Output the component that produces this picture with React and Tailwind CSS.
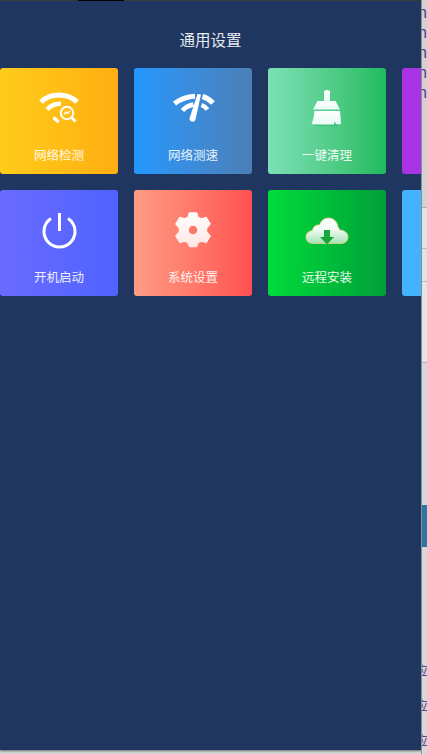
const font = { fontFamily: '"Noto Sans CJK SC", "Liberation Sans", sans-serif' };

function WifiCheck() {
  return (
    <svg width="48" height="40" viewBox="0 0 48 40" fill="none" stroke="#fff">
      <path d="M6 14 C15 4.5 33 4.5 42 14" strokeWidth="5" />
      <path d="M12 21.5 C16.5 17 21 15.5 26 15.8" strokeWidth="4.4" />
      <path d="M18.5 29.5 L23.5 34" strokeWidth="3.4" />
      <circle cx="32" cy="25" r="8.6" fill="#ffbd16" stroke="none" />
      <circle cx="32" cy="25" r="6.2" strokeWidth="2" />
      <path d="M36.8 29.8 L40.5 33.5" strokeWidth="2.8" />
      <path d="M28.8 26.5 L31 24 L32.6 25.6 L35 22.8" strokeWidth="1.2" />
    </svg>
  );
}

function WifiSpeed() {
  return (
    <svg width="48" height="40" viewBox="0 0 48 40" fill="none" stroke="#fff">
      <path d="M5.5 15.5 C12 10.5 19 8.5 26 8.2" strokeWidth="5" />
      <path d="M33.5 8.5 C37 9.5 40.5 11.5 44 15" strokeWidth="5" />
      <path d="M13.5 22.5 C16 19.5 20 17.5 24.5 16.5" strokeWidth="4.5" />
      <path d="M32.5 17 C35 18 37 19.5 38.5 21.5" strokeWidth="4.5" />
      <path d="M28.5 6 L32 6.5 L26.5 31.5 C25.5 35 20 34 20.5 30.5 Z" fill="#fff" stroke="none" />
    </svg>
  );
}

function Broom() {
  return (
    <svg width="48" height="40" viewBox="0 0 48 40">
      <defs>
        <linearGradient id="broomFill" x1="0" y1="0" x2="0" y2="1">
          <stop offset="0" stopColor="#ffffff" />
          <stop offset="1" stopColor="#e8fbf6" />
        </linearGradient>
      </defs>
      <ellipse cx="24" cy="37" rx="14" ry="1.5" fill="#17a565" opacity="0.3" />
      <path d="M21 4 Q21 2 24 2 Q27 2 27 4 V13 H21 Z" fill="url(#broomFill)" />
      <path d="M14.5 13 H32.5 L37 21.5 H10 Z" fill="url(#broomFill)" />
      <path d="M11.5 23 H37 L38 35 Q38 36.5 36 36.5 L33 36 L31.5 33 L31 36.5 H12 Q9 36.5 8.5 35.5 Q11 31 11.5 23 Z" fill="url(#broomFill)" />
    </svg>
  );
}

function Power() {
  return (
    <svg width="48" height="40" viewBox="0 0 48 40" fill="none" stroke="#fff" strokeWidth="3">
      <path d="M16 8.5 A15.5 15.5 0 1 0 33 8.5" />
      <path d="M24.5 3 V21" />
    </svg>
  );
}

function Gear() {
  return (
    <svg width="48" height="40" viewBox="0 0 48 40">
      <defs>
        <linearGradient id="gearFill" x1="0" y1="0" x2="0" y2="1">
          <stop offset="0" stopColor="#ffffff" />
          <stop offset="1" stopColor="#ffe6e2" />
        </linearGradient>
      </defs>
      <path
        fillRule="evenodd"
        fill="url(#gearFill)"
        stroke="url(#gearFill)"
        strokeWidth="1.5"
        strokeLinejoin="round"
        d="M20.5 3 H27.5 L29 7.5 L32.5 9 L37 7.5 L41 14 L37.5 18 V22 L41 26 L37 32.5 L32.5 31 L29 32.5 L27.5 36.5 H20.5 L19 32.5 L15.5 31 L11 32.5 L7 26 L10.5 22 V18 L7 14 L11 7.5 L15.5 9 L19 7.5 Z M24 15 A5 5 0 1 0 24 25 A5 5 0 1 0 24 15 Z"
      />
    </svg>
  );
}

function Cloud() {
  return (
    <svg width="48" height="40" viewBox="0 0 48 40">
      <defs>
        <linearGradient id="cloudFill" x1="0" y1="0" x2="0" y2="1">
          <stop offset="0" stopColor="#ffffff" />
          <stop offset="0.45" stopColor="#f1fbf3" />
          <stop offset="1" stopColor="#a5e3b4" />
        </linearGradient>
      </defs>
      <path
        fill="url(#cloudFill)"
        stroke="#e8cf7d"
        strokeWidth="0.8"
        d="M10 33.5 C5 33.5 3 30 3 27 C3 23 6 21 9.5 20.5 C10 16.5 13 14.5 16.5 15 C18 10.5 21.5 8 25.5 8 C31 8 34.5 12 35 17 C36 18 36.5 19 36.5 20 C41.5 20 45 23 45 27 C45 31 42 33.5 38 33.5 Z"
      />
      <path d="M21 20 H27 V27 H31 L24 34.5 L17 27 H21 Z" fill="#17a83d" />
    </svg>
  );
}

const rows = [
  [
    { label: "网络检测", icon: <WifiCheck />, bg: "bg-gradient-to-r from-[#ffcc1a] to-[#ffae12]" },
    { label: "网络测速", icon: <WifiSpeed />, bg: "bg-gradient-to-r from-[#2098ff] to-[#4a7fb6]" },
    { label: "一键清理", icon: <Broom />, bg: "bg-gradient-to-r from-[#7be0b6] to-[#1cbb5e]" },
    { label: "", bg: "bg-[#a934e6]" },
  ],
  [
    { label: "开机启动", icon: <Power />, bg: "bg-gradient-to-r from-[#6a6aff] to-[#4f63ff]" },
    { label: "系统设置", icon: <Gear />, bg: "bg-gradient-to-r from-[#ff9b84] to-[#ff4f50]" },
    { label: "远程安装", icon: <Cloud />, bg: "bg-gradient-to-r from-[#00dc3a] to-[#00a038]" },
    { label: "", bg: "bg-[#42b3ff]" },
  ],
];

function Card({ item }) {
  return (
    <div className={`w-[118px] h-[106px] shrink-0 rounded-[3px] flex flex-col items-center pt-5 ${item.bg}`}>
      <div className="h-10">{item.icon}</div>
      <div className="mt-[17px] text-[12.5px] leading-5 text-white/90">{item.label}</div>
    </div>
  );
}

// what shows of the page behind the drawer
function BehindStrip() {
  return (
    <div className="w-1.5 h-[754px] shrink-0 overflow-hidden flex flex-col bg-[#d6d6d6] text-[#4a3f8f] border-l border-[#8f8f8f]">
      <div className="h-[208px] bg-[#d2d2d2] border-b border-[#aeaeae] pt-[2px]">
        {["n", "n", "n", "n", "n"].map((c, i) => (
          <div key={i} className="h-5 text-[15px] leading-5 -ml-[4px]">{c}</div>
        ))}
      </div>
      <div className="h-[41px] bg-[#e2e2e2] border-b border-[#bdbdbd]" />
      <div className="h-[33px] bg-[#e2e2e2] border-b border-[#bdbdbd]" />
      <div className="h-[81px] bg-[#e4e4e4] border-b border-[#b4b4b4]" />
      <div className="h-[142px] bg-[#d5d7dc]" />
      <div className="h-[42px] bg-[#2d76a4]" />
      <div className="h-[207px] bg-[#d8d8d8] flex flex-col pt-[116px] gap-[21px] overflow-hidden">
        {["应", "应", "应"].map((c, i) => (
          <div key={i} className="h-[14px] text-[13px] leading-[14px] -ml-[7px] text-[#5a4a90]">{c}</div>
        ))}
      </div>
    </div>
  );
}

export default function App() {
  return (
    <div className="w-[427px] h-[754px] flex overflow-hidden bg-[#d6d6d6]" style={font}>
      <div className="w-[421px] h-[750px] shrink-0 bg-[#1e3660] overflow-hidden shadow-[0_1px_2px_rgba(0,0,0,0.5)]">
        <div className="h-px bg-[#3b3a38]">
          <div className="h-px w-[46px] ml-[78px] bg-black" />
        </div>
        <div className="h-[67px] pt-[28px] text-center text-[15.5px] leading-5 text-white/90">通用设置</div>
        <div className="flex flex-col gap-4">
          {rows.map((row, i) => (
            <div key={i} className="flex gap-4">
              {row.map((item, j) => (
                <Card key={j} item={item} />
              ))}
            </div>
          ))}
        </div>
      </div>
      <BehindStrip />
    </div>
  );
}
